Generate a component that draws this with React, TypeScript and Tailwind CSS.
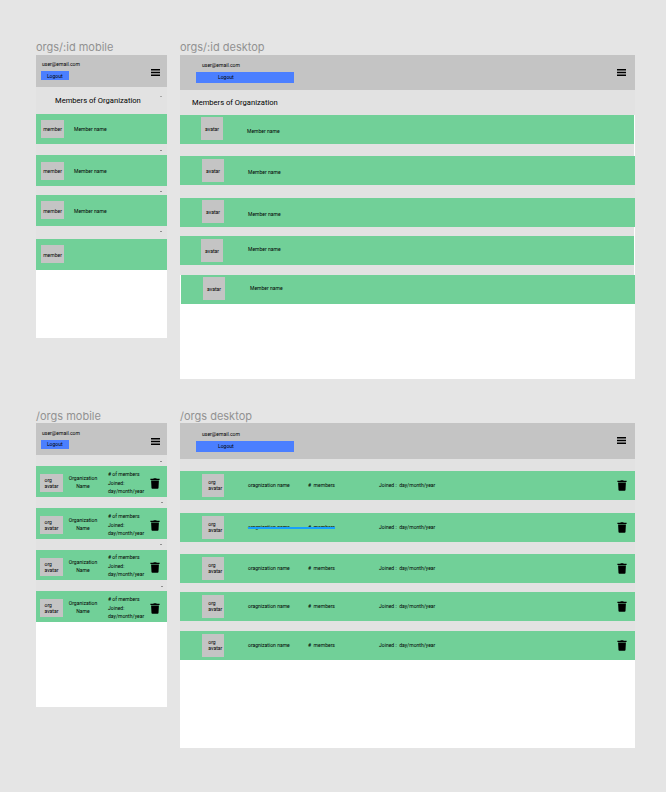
import React from "react";

const text =
  "font-['Roboto',sans-serif] text-[5.05px] leading-[6px] whitespace-nowrap text-black";

function Menu({ className }: { className: string }) {
  return (
    <svg viewBox="0 0 9 7" className={`h-[7px] w-[9px] shrink-0 ${className}`}>
      <path d="M0 .1h9v1.4H0zM0 2.8h9v1.4H0zM0 5.5h9v1.4H0z" />
    </svg>
  );
}

function Trash({ className }: { className: string }) {
  return (
    <svg viewBox="0 0 10 11" className={`h-[11px] w-[10px] shrink-0 ${className}`}>
      <path d="M.4 .7h2.9L3.8.2h2.4l.5.5h2.9v1.2H.4zM1.1 2.4h7.8L8.5 10q-.1.7-.8.7H2.3q-.7 0-.8-.7z" />
    </svg>
  );
}

function Title({ className = "", children }: { className?: string; children: React.ReactNode }) {
  return (
    <h2
      className={`h-[16px] font-['Inter',sans-serif] text-[11px] leading-[16px] whitespace-nowrap text-[#929292] ${className}`}
    >
      {children}
    </h2>
  );
}

function Gap({ className, tick }: { className: string; tick?: string }) {
  return (
    <div className={`flex shrink-0 bg-[#e2e2e2] ${className}`}>
      {tick && <span className={`h-px w-[2px] bg-[#909090] ${tick}`} />}
    </div>
  );
}

function MobileHeader({
  userClass,
  buttonText,
  menu,
}: {
  userClass: string;
  buttonText: string;
  menu: string;
}) {
  return (
    <header className="flex h-[32px] shrink-0 bg-[#c4c4c4]">
      <div className="w-[110px]">
        <p className={`ml-[6px] ${text} ${userClass}`}>user@email.com</p>
        <button
          className={`ml-[4.5px] block h-[9px] w-[28.5px] bg-[#4b7fff] text-center font-['Roboto',sans-serif] text-[5.05px] whitespace-nowrap ${buttonText}`}
        >
          Logout
        </button>
      </div>
      <Menu className={`ml-[5px] ${menu}`} />
    </header>
  );
}

function DesktopHeader({
  className,
  userClass,
}: {
  className: string;
  userClass: string;
}) {
  return (
    <header className={`flex shrink-0 bg-[#c4c4c4] ${className}`}>
      <div className="w-[437px]">
        <p className={`ml-[22px] ${text} ${userClass}`}>user@email.com</p>
        <button className="ml-[16px] block h-[11px] w-[98px] bg-[#4b7fff] pl-[22px] text-left font-['Roboto',sans-serif] text-[5.05px] leading-[11px] whitespace-nowrap">
          Logout
        </button>
      </div>
      <Menu className="mt-[14px]" />
    </header>
  );
}

function MobileMember({
  className,
  avatar,
  name,
}: {
  className: string;
  avatar: string;
  name?: string;
}) {
  return (
    <div className={`flex shrink-0 items-start bg-[#71d098] ${className}`}>
      <div className={`ml-[5px] h-[18px] w-[23px] bg-[#c4c4c4] text-center ${avatar}`}>
        <p className={text}>member</p>
      </div>
      {name && <span className={`ml-[10px] ${text} ${name}`}>Member name</span>}
    </div>
  );
}

function Member({ row, avatar, name }: { row: string; avatar: string; name: string }) {
  return (
    <div className={`flex h-[29px] shrink-0 items-start bg-[#71d098] ${row}`}>
      <div className={`flex h-[23px] w-[22px] items-center justify-center bg-[#c4c4c4] ${avatar}`}>
        <span className={text}>avatar</span>
      </div>
      <span className={`${text} ${name}`}>Member name</span>
    </div>
  );
}

function MobileOrg({ className, details = "mt-[5px]" }: { className: string; details?: string }) {
  return (
    <div className={`flex shrink-0 items-start bg-[#71d098] ${className}`}>
      <div className="mt-[8px] ml-[4px] h-[18px] w-[23px] shrink-0 bg-[#c4c4c4] pt-[3px] pl-[4.5px]">
        <p className={text}>
          org
          <br />
          avatar
        </p>
      </div>
      <div className={`mt-[9px] ml-[5px] w-[30px] shrink-0 text-center ${text}`}>
        <p>Organization</p>
        <p className="mt-[2px]">Name</p>
      </div>
      <div className={`ml-[10px] w-[42px] shrink-0 ${text} ${details}`}>
        <p># of members</p>
        <p className="mt-[3px]">Joined:</p>
        <p className="mt-[2px]">day/month/year</p>
      </div>
      <Trash className="mt-[12px]" />
    </div>
  );
}

function Org({ struck }: { struck?: boolean }) {
  return (
    <div className="flex h-[29px] shrink-0 items-start bg-[#71d098]">
      <div className="mt-[3px] ml-[22px] h-[23px] w-[22px] shrink-0 bg-[#c4c4c4] pt-[5px] pl-[6.3px]">
        <p className={text}>
          org
          <br />
          avatar
        </p>
      </div>
      <div className="relative mt-[11px] ml-[24px] flex w-[87px] shrink-0">
        <span className={`w-[60px] ${text}`}>oragnization name</span>
        <span className={`whitespace-pre ${text}`}>{"#  members"}</span>
        {struck && <span className="absolute top-[3px] left-0 h-[2px] w-full bg-[#18a0fb]" />}
      </div>
      <span className={`mt-[11px] ml-[44px] w-[238px] shrink-0 ${text}`}>
        Joined :&nbsp; day/month/year
      </span>
      <Trash className="mt-[9px]" />
    </div>
  );
}

export default function App() {
  return (
    <main className="flex h-[792px] w-[666px] flex-col overflow-hidden bg-[#e5e5e5] pt-[39px] pl-[36px]">
      <section className="flex h-[368px] shrink-0 gap-[13px]">
        <div className="w-[131px]">
          <Title>orgs/:id mobile</Title>
          <div className="flex h-[283px] flex-col bg-white">
            <MobileHeader
              userClass="mt-[6px]"
              buttonText="mt-[4px] leading-[10px]"
              menu="mt-[14px]"
            />
            <div className="flex h-[27px] shrink-0 bg-[#e2e2e2]">
              <h3 className="mt-[9px] ml-[19px] w-[105px] font-['Roboto',sans-serif] text-[7.6px] leading-[10px] whitespace-nowrap">
                Members of Organization
              </h3>
              <span className="mt-[9px] h-px w-[2px] bg-[#a8a8a8]" />
            </div>
            <MobileMember className="h-[30px]" avatar="mt-[6px] pt-[6px]" name="mt-[12px]" />
            <Gap className="h-[11px]" tick="mt-[6px] ml-[124px]" />
            <MobileMember className="h-[31px]" avatar="mt-[7px] pt-[6px]" name="mt-[13px]" />
            <Gap className="h-[9px]" tick="mt-[5px] ml-[124px]" />
            <MobileMember className="h-[31px]" avatar="mt-[6px] pt-[7px]" name="mt-[13px]" />
            <Gap className="h-[13px]" tick="mt-[5px] ml-[124px]" />
            <MobileMember className="h-[31px]" avatar="mt-[6px] pt-[7px]" />
          </div>
        </div>
        <div className="w-[455.4px]">
          <Title>orgs/:id desktop</Title>
          <div className="flex h-[324px] flex-col bg-white">
            <DesktopHeader className="h-[35px]" userClass="mt-[7px] mb-[4px]" />
            <div className="h-[25px] shrink-0 bg-[#e2e2e2]">
              <h3 className="pt-[8px] pl-[12px] font-['Roboto',sans-serif] text-[7.6px] leading-[10px] whitespace-nowrap">
                Members of Organization
              </h3>
            </div>
            <Member row="mr-px" avatar="mt-[2px] ml-[21px]" name="mt-[13px] ml-[24px]" />
            <Gap className="mr-px h-[12px]" />
            <Member row="" avatar="mt-[3px] ml-[22px]" name="mt-[13px] ml-[24px]" />
            <Gap className="h-[13px]" />
            <Member row="" avatar="mt-[2px] ml-[22px]" name="mt-[13px] ml-[24px]" />
            <Gap className="mr-px h-[9px]" />
            <Member row="mr-px" avatar="mt-[3px] ml-[21px]" name="mt-[10px] ml-[25px]" />
            <Gap className="mr-px h-[10px]" />
            <Member row="ml-px" avatar="mt-[2px] ml-[22px]" name="mt-[10px] ml-[25px]" />
          </div>
        </div>
      </section>
      <section className="flex gap-[13px]">
        <div className="w-[131px]">
          <Title className="pt-px">/orgs mobile</Title>
          <div className="flex h-[284px] flex-col bg-white">
            <MobileHeader
              userClass="mt-[7px]"
              buttonText="mt-[4px] leading-[9px]"
              menu="mt-[14.5px]"
            />
            <Gap className="h-[11px]" tick="mt-[6px] ml-[124px]" />
            <MobileOrg className="h-[31px]" />
            <Gap className="h-[11px]" tick="mt-[5px] ml-[125px]" />
            <MobileOrg className="h-[31px]" />
            <Gap className="h-[11px]" tick="mt-[5px] ml-[124px]" />
            <MobileOrg className="h-[30px]" details="mt-[4px]" />
            <Gap className="h-[11px]" tick="mt-[6px] ml-[125px]" />
            <MobileOrg className="h-[31px]" />
          </div>
        </div>
        <div className="w-[455.4px]">
          <Title className="pt-px">/orgs desktop</Title>
          <div className="flex h-[325px] flex-col bg-white">
            <DesktopHeader className="h-[36px]" userClass="mt-[8px] mb-[4px]" />
            <Gap className="h-[12px]" />
            <Org />
            <Gap className="h-[13px]" />
            <Org struck />
            <Gap className="h-[12px]" />
            <Org />
            <Gap className="h-[9px]" />
            <Org />
            <Gap className="h-[10px]" />
            <Org />
          </div>
        </div>
      </section>
    </main>
  );
}
